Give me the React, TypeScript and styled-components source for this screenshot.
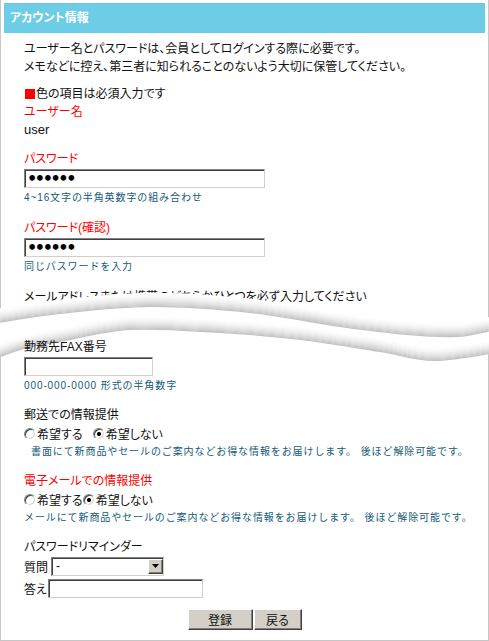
import React from "react";
import styled, { createGlobalStyle } from "styled-components";

const GlobalStyle = createGlobalStyle`
  html, body { margin: 0; padding: 0; background: #fff; }
  body {
    font-family: "Liberation Sans", "Noto Sans CJK JP", sans-serif;
    font-size: 12px;
    color: #111;
  }
`;

const Frame = styled.div`
  width: 489px;
  box-sizing: border-box;
  border: 1px solid #c6c6c6;
  border-top: none;
  padding: 3px;
  background: #fff;
`;

const Header = styled.h1`
  margin: 0;
  height: 30px;
  line-height: 30px;
  padding-left: 6px;
  background: #6dcde6;
  color: #fff;
  font-size: 12px;
  font-weight: bold;
  font-feature-settings: "palt";
`;

const Body = styled.div`
  padding: 7px 20px 7px;
  font-feature-settings: "palt";
`;

const Section = styled.div<{ $mt?: number }>`
  margin-top: ${(p) => p.$mt ?? 0}px;
`;

const Lower = styled.div`
  position: relative;
  z-index: 1;
`;

const Line = styled.div<{ $lh?: number }>`
  line-height: ${(p) => p.$lh ?? 18}px;
  white-space: nowrap;
`;

const Mark = styled.span`
  display: inline-block;
  width: 10px;
  height: 10px;
  margin: 0 1px 0 1px;
  background: #ff0000;
  vertical-align: -1px;
`;

const Label = styled.div<{ $required?: boolean }>`
  line-height: 19px;
  color: ${(p) => (p.$required ? "#ff0000" : "#111")};
  white-space: nowrap;
`;

const Value = styled.div`
  line-height: 16px;
  font-size: 13px;
`;

const Hint = styled.div<{ $indent?: number; $lh?: number }>`
  line-height: ${(p) => p.$lh ?? 20}px;
  padding-left: ${(p) => p.$indent ?? 0}px;
  font-size: 10px;
  letter-spacing: 0.9px;
  color: #135a7a;
  font-feature-settings: normal;
  white-space: nowrap;
`;

const TextInput = styled.input<{ $w: number }>`
  display: block;
  box-sizing: border-box;
  width: ${(p) => p.$w}px;
  height: 19px;
  margin: 0;
  padding: 0 3px;
  border: 1px solid;
  border-color: #808080 #d4d0c8 #d4d0c8 #808080;
  box-shadow: inset 1px 1px 0 #404040;
  background: #fff;
  font-family: "Liberation Sans", "Noto Sans CJK JP", sans-serif;
  font-size: 12px;
  outline: none;
`;

const PasswordInput = styled(TextInput)`
  font-family: "DejaVu Sans", sans-serif;
  font-weight: bold;
  font-size: 16px;
  letter-spacing: -2.4px;
  padding-left: 2px;
`;

const RadioRow = styled.div`
  display: flex;
  align-items: center;
  height: 17px;
`;

const RadioOption = styled.label<{ $after?: number }>`
  display: inline-flex;
  align-items: center;
  margin-right: ${(p) => p.$after ?? 0}px;
  white-space: nowrap;
`;

const Radio = styled.input`
  appearance: none;
  -webkit-appearance: none;
  box-sizing: border-box;
  width: 12px;
  height: 12px;
  margin: 0 1px 0 0;
  border-radius: 50%;
  border: 1px solid;
  border-color: #808080 #ffffff #ffffff #808080;
  box-shadow: inset 1px 1px 0 #404040, inset -1px -1px 0 #d4d0c8;
  background: #fff;
  &:checked {
    background: radial-gradient(circle, #000 0 1.8px, #fff 2.3px);
  }
`;

const FieldRow = styled.div<{ $mt?: number }>`
  display: flex;
  align-items: center;
  height: 20px;
  margin-top: ${(p) => p.$mt ?? 0}px;
`;

const RowLabel = styled.span<{ $gap: number }>`
  margin-right: ${(p) => p.$gap}px;
  white-space: nowrap;
`;

const SelectWrap = styled.div`
  position: relative;
  width: 113px;
  height: 19px;
`;

const Select = styled.select`
  appearance: none;
  -webkit-appearance: none;
  box-sizing: border-box;
  width: 100%;
  height: 100%;
  margin: 0;
  padding: 0 0 0 4px;
  border: 1px solid;
  border-color: #808080 #d4d0c8 #d4d0c8 #808080;
  box-shadow: inset 1px 1px 0 #404040;
  background: #fff;
  border-radius: 0;
  font-family: "Liberation Sans", "Noto Sans CJK JP", sans-serif;
  font-size: 12px;
  color: #111;
  outline: none;
`;

const SelectArrow = styled.span`
  position: absolute;
  top: 2px;
  right: 1px;
  width: 15px;
  height: 15px;
  box-sizing: border-box;
  background: #d4d0c8;
  border: 1px solid;
  border-color: #fff #404040 #404040 #fff;
  box-shadow: inset -1px -1px 0 #808080;
  display: flex;
  align-items: center;
  justify-content: center;
  pointer-events: none;
`;

const ButtonRow = styled.div`
  display: flex;
  justify-content: center;
  gap: 1px;
  margin-top: 11px;
`;

const Button = styled.button<{ $w: number }>`
  box-sizing: border-box;
  width: ${(p) => p.$w}px;
  height: 21px;
  margin: 0;
  padding: 0;
  background: #d4d0c8;
  border: 1px solid;
  border-color: #ffffff #404040 #404040 #ffffff;
  box-shadow: inset -1px -1px 0 #808080;
  font-family: "Liberation Sans", "Noto Sans CJK JP", sans-serif;
  font-size: 12px;
  color: #111;
  font-feature-settings: "palt";
`;

const Tear = styled.div`
  position: relative;
  height: 32px;
`;

const TearArt = styled.svg`
  position: absolute;
  top: -21px;
  left: -24px;
  width: 489px;
  height: 85px;
  pointer-events: none;
`;

type Pt = [number, number];

function smooth(points: Pt[]): string {
  let d = `M${points[0][0]},${points[0][1]}`;
  for (let i = 0; i < points.length - 1; i++) {
    const p0 = points[i - 1] || points[i];
    const p1 = points[i];
    const p2 = points[i + 1];
    const p3 = points[i + 2] || p2;
    const c1x = p1[0] + (p2[0] - p0[0]) / 6;
    const c1y = p1[1] + (p2[1] - p0[1]) / 6;
    const c2x = p2[0] - (p3[0] - p1[0]) / 6;
    const c2y = p2[1] - (p3[1] - p1[1]) / 6;
    d += ` C${c1x.toFixed(2)},${c1y.toFixed(2)} ${c2x.toFixed(2)},${c2y.toFixed(2)} ${p2[0]},${p2[1]}`;
  }
  return d;
}

const shift = (pts: Pt[], dy: number): Pt[] => pts.map(([x, y]) => [x, y + dy] as Pt);

const UPPER: Pt[] = [
  [-2, 38], [60, 29], [150, 22], [250, 28], [340, 42], [407, 50], [457, 52], [491, 46],
];
const LOWER: Pt[] = [
  [-2, 73], [24, 64], [60, 57], [130, 45], [220, 48], [300, 55], [380, 67], [433, 76], [491, 69],
];

function shade(k: number, steps: number): string {
  const t = Math.pow(1 - k / steps, 1.6);
  const v = Math.round(255 - t * (255 - 196));
  return `rgb(${v},${v},${v})`;
}

const Band: React.FC<{ pts: Pt[] }> = ({ pts }) => {
  const steps = 13;
  const items = [];
  for (let k = steps; k >= 0; k--) {
    items.push(
      <path
        key={k}
        d={smooth(shift(pts, -k - 0.6))}
        fill="none"
        stroke={shade(k, steps)}
        strokeWidth={1.3}
      />
    );
  }
  return <g>{items}</g>;
};

const TornEdge: React.FC = () => {
  const top = shift(UPPER, -14);
  const rev = [...LOWER].reverse();
  const fill = `${smooth(top)} L${rev[0][0]},${rev[0][1]} ${smooth(rev).replace(/^M[^ ]+/, "")} Z`;
  return (
    <TearArt viewBox="0 0 489 85" aria-hidden="true">
      <path d={fill} fill="#fff" />
      <Band pts={UPPER} />
      <Band pts={LOWER} />
    </TearArt>
  );
};

export default function App() {
  return (
    <>
      <GlobalStyle />
      <Frame>
        <Header>アカウント情報</Header>
        <Body>
          <Line>ユーザー名とパスワードは、会員としてログインする際に必要です。</Line>
          <Line>メモなどに控え、第三者に知られることのないよう大切に保管してください。</Line>

          <Section $mt={9}>
            <Line>
              <Mark aria-label="■" />色の項目は必須入力です
            </Line>
            <Label $required>ユーザー名</Label>
            <Value>user</Value>
          </Section>

          <Section $mt={12}>
            <Label $required>パスワード</Label>
            <PasswordInput $w={241} type="password" defaultValue="abcdef" />
            <Hint>4~16文字の半角英数字の組み合わせ</Hint>
          </Section>

          <Section $mt={11}>
            <Label $required>パスワード(確認)</Label>
            <PasswordInput $w={241} type="password" defaultValue="abcdef" />
            <Hint>同じパスワードを入力</Hint>
          </Section>

          <Section $mt={11}>
            <Line>メールアドレスまたは携帯のどちらかひとつを必ず入力してください</Line>
          </Section>

          <Tear>
            <TornEdge />
          </Tear>

          <Lower>
            <Section>
              <Label>勤務先FAX番号</Label>
              <TextInput $w={129} type="text" />
              <Hint>000-000-0000 形式の半角数字</Hint>
            </Section>

            <Section $mt={10}>
              <Label>郵送での情報提供</Label>
              <RadioRow>
                <RadioOption $after={10}>
                  <Radio type="radio" name="post" />
                  希望する
                </RadioOption>
                <RadioOption>
                  <Radio type="radio" name="post" defaultChecked />
                  希望しない
                </RadioOption>
              </RadioRow>
              <Hint $indent={7} $lh={19}>
                書面にて新商品やセールのご案内などお得な情報をお届けします。 後ほど解除可能です。
              </Hint>
            </Section>

            <Section $mt={11}>
              <Label $required>電子メールでの情報提供</Label>
              <RadioRow>
                <RadioOption>
                  <Radio type="radio" name="mail" />
                  希望する
                </RadioOption>
                <RadioOption>
                  <Radio type="radio" name="mail" defaultChecked />
                  希望しない
                </RadioOption>
              </RadioRow>
              <Hint $lh={19}>
                メールにて新商品やセールのご案内などお得な情報をお届けします。 後ほど解除可能です。
              </Hint>
            </Section>

            <Section $mt={11}>
              <Line>パスワードリマインダー</Line>
              <FieldRow>
                <RowLabel $gap={3}>質問</RowLabel>
                <SelectWrap>
                  <Select defaultValue="-">
                    <option value="-">-</option>
                  </Select>
                  <SelectArrow>
                    <svg width="7" height="4" viewBox="0 0 7 4">
                      <path d="M0 0 H7 L3.5 4 Z" fill="#000" />
                    </svg>
                  </SelectArrow>
                </SelectWrap>
              </FieldRow>
              <FieldRow $mt={2}>
                <RowLabel $gap={1}>答え</RowLabel>
                <TextInput $w={155} type="text" />
              </FieldRow>
            </Section>

            <ButtonRow>
              <Button $w={65} type="button">登録</Button>
              <Button $w={48} type="button">戻る</Button>
            </ButtonRow>
          </Lower>
        </Body>
      </Frame>
    </>
  );
}
